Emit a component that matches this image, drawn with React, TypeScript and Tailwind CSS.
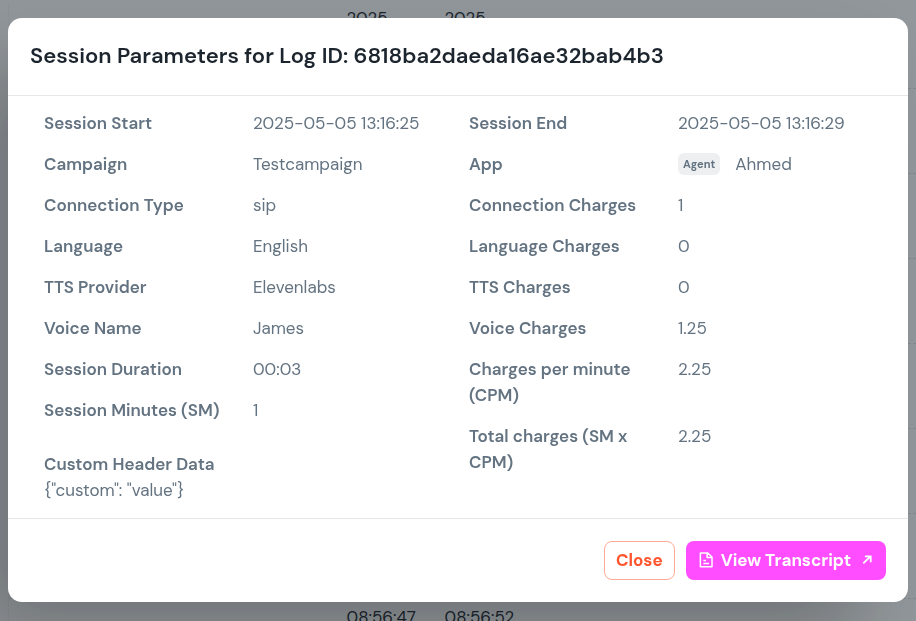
import React from 'react';

interface Param {
  label: string;
  value: string;
  badge?: string;
}

const leftParams: Param[] = [
  { label: 'Session Start', value: '2025-05-05 13:16:25' },
  { label: 'Campaign', value: 'Testcampaign' },
  { label: 'Connection Type', value: 'sip' },
  { label: 'Language', value: 'English' },
  { label: 'TTS Provider', value: 'Elevenlabs' },
  { label: 'Voice Name', value: 'James' },
  { label: 'Session Duration', value: '00:03' },
  { label: 'Session Minutes (SM)', value: '1' },
];

const rightParams: Param[] = [
  { label: 'Session End', value: '2025-05-05 13:16:29' },
  { label: 'App', value: 'Ahmed', badge: 'Agent' },
  { label: 'Connection Charges', value: '1' },
  { label: 'Language Charges', value: '0' },
  { label: 'TTS Charges', value: '0' },
  { label: 'Voice Charges', value: '1.25' },
  { label: 'Charges per minute (CPM)', value: '2.25' },
  { label: 'Total charges (SM x CPM)', value: '2.25' },
];

// start / end columns of the log rows behind the dialog
const logRows = [
  ['2025', '2025'],
  ['', ''],
  ['', ''],
  ['', ''],
  ['', ''],
  ['', ''],
  ['', ''],
  ['08:56:47', '08:56:52'],
];

const ParamList: React.FC<{ params: Param[] }> = ({ params }) => (
  <dl className="flex flex-col gap-[15px]">
    {params.map((param) => (
      <div key={param.label} className="grid grid-cols-[14fr_13fr]">
        <dt className="pr-5 font-semibold">{param.label}</dt>
        <dd className="flex items-center self-start whitespace-nowrap">
          {param.badge && (
            <span className="mr-[15px] flex h-[22px] items-center rounded-md bg-[#edeff1] px-[5px] text-[11px] font-bold">
              {param.badge}
            </span>
          )}
          {param.value}
        </dd>
      </div>
    ))}
  </dl>
);

const LogsTable: React.FC = () => (
  <div className="pt-[3px] pl-2">
    <table className="w-full table-fixed border-collapse border-l border-[#f4f6f8] text-[17px] leading-6 text-[#1c252e]">
      <tbody>
        {logRows.map(([start, end], i) => (
          <tr key={i} className="h-[85px] border-b border-dashed border-[#dfe3e8] align-top">
            <td className="w-[338px]" />
            <td className={i === 0 ? 'w-[98px] pt-[3px]' : 'pt-[6px]'}>{start}</td>
            <td className={i === 0 ? 'pt-[3px]' : 'pt-[6px]'}>{end}</td>
          </tr>
        ))}
      </tbody>
    </table>
  </div>
);

const App: React.FC = () => {
  return (
    <div className="h-screen overflow-hidden bg-white font-['DM_Sans','Inter',sans-serif]">
      <LogsTable />
      <div className="fixed inset-0 flex items-center justify-center bg-[#1c252e]/48 px-2 pb-px">
        <section
          role="dialog"
          aria-labelledby="dialog-title"
          className="w-full max-w-[900px] rounded-[14px] bg-white text-[17px] leading-[26px] text-[#637381] shadow-[-40px_40px_80px_-8px_rgba(0,0,0,0.24)]"
        >
          <h2 id="dialog-title" className="border-b border-[#e5e8eb] px-[22px] pt-[21px] pb-[22px] text-[22px] leading-[34px] font-semibold text-[#1c252e]">
            Session Parameters for Log ID: 6818ba2daeda16ae32bab4b3
          </h2>

          <div className="px-9 pt-[14px] pb-[15px]">
            <div className="grid grid-cols-2 gap-[22px]">
              <div>
                <ParamList params={leftParams} />
                <div className="mt-7">
                  <h3 className="font-semibold">Custom Header Data</h3>
                  <p>{'{"custom": "value"}'}</p>
                </div>
              </div>
              <ParamList params={rightParams} />
            </div>
          </div>

          <div className="flex justify-end gap-[11px] border-t border-[#e5e8eb] p-[22px]">
            <button type="button" className="h-[39px] rounded-lg border border-[#ffaa96] px-[11px] pb-px font-bold text-[#ff5630]">
              Close
            </button>
            <button type="button" className="flex h-[39px] items-center gap-[6px] rounded-lg bg-[#ff4dff] px-[11px] pb-px font-bold text-white">
              <svg className="size-[18px]" viewBox="0 0 24 24" fill="none" stroke="currentColor" strokeWidth="2" strokeLinejoin="round">
                <path d="M4.5 2.5H14L20 8v13H4.5zM13.5 3v5.5H20M8.5 12.5h3.500M8.5 16.5h7.500" />
              </svg>
              View Transcript
              <svg className="size-[18px]" viewBox="0 0 24 24" fill="none" stroke="currentColor" strokeWidth="2.4">
                <path d="M8.4 16.6 18 7M10.5 7.200h7.800V15" />
              </svg>
            </button>
          </div>
        </section>
      </div>
    </div>
  );
};

export default App;
